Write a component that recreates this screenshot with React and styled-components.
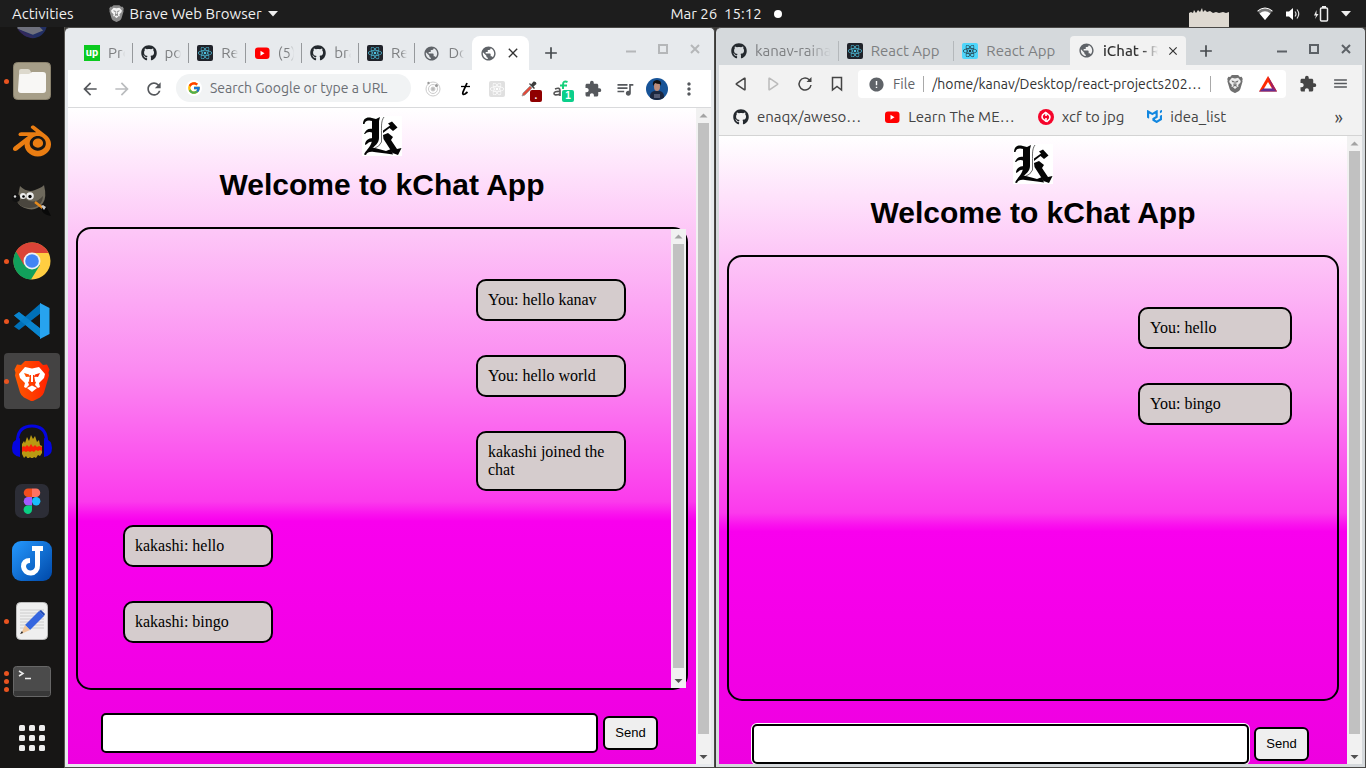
import React from "react";
import styled, { createGlobalStyle, css } from "styled-components";
import { FaGithub, FaReact } from "react-icons/fa";
import {
  MdArrowBack, MdArrowForward, MdRefresh, MdExtension, MdQueueMusic,
  MdMoreVert, MdPublic, MdClose, MdAdd, MdError, MdMenu,
} from "react-icons/md";
import { SiBlender, SiMui } from "react-icons/si";
import { FcGoogle } from "react-icons/fc";

const GlobalStyle = createGlobalStyle`
  * { box-sizing: border-box; }
  body { margin: 0; background: #161514; overflow: hidden; }
  button, input { font: inherit; margin: 0; }
  svg { display: block; flex: none; }
`;

const uiFont = css`
  font-family: Ubuntu, "Noto Sans", "Open Sans", sans-serif;
`;

const Desktop = styled.div`
  ${uiFont}
  height: 100vh;
  display: flex;
  flex-direction: column;
  background: #161514;
`;

/* ---------- top bar ---------- */

const TopBar = styled.header`
  height: 27px;
  flex: none;
  display: grid;
  grid-template-columns: 1fr auto 1fr;
  align-items: center;
  background: #1d1d1d;
  color: #f0f0f0;
  font-size: 15px;
  line-height: 20px;
`;

const BarGroup = styled.div`
  display: flex;
  align-items: center;
  height: 27px;
  gap: ${(p) => p.$gap || 0}px;
  justify-content: ${(p) => (p.$end ? "flex-end" : "flex-start")};
  padding: ${(p) => (p.$end ? "0 15px 0 0" : "0 0 0 12px")};
`;

const BarButton = styled.button`
  display: flex;
  align-items: center;
  gap: 6px;
  padding: 0;
  border: 0;
  background: none;
  color: inherit;
  white-space: nowrap;
`;

const Clock = styled.div`
  display: flex;
  align-items: center;
  gap: 12px;
  padding-left: 86px;
  white-space: pre;
`;

const Dot = styled.i`
  width: 8px;
  height: 8px;
  border-radius: 50%;
  background: #fff;
`;

const Load = styled.svg`
  align-self: flex-end;
  margin-right: 16px;
`;

/* ---------- dock ---------- */

const Main = styled.div`
  flex: 1;
  min-height: 0;
  display: flex;
`;

const Dock = styled.nav`
  width: 65px;
  flex: none;
  display: flex;
  flex-direction: column;
  border-right: 1px solid #55534f;
  background: #171615;
  overflow: hidden;
`;

const DockItem = styled.button`
  position: relative;
  flex: none;
  height: ${(p) => p.$h || 60}px;
  padding: 0;
  border: 0;
  background: none;
  display: flex;
  align-items: center;
  justify-content: center;
`;

const DockTile = styled.span`
  width: 56px;
  height: 56px;
  border-radius: 4px;
  display: flex;
  align-items: center;
  justify-content: center;
  background: ${(p) => (p.$active ? "#444343" : "transparent")};
`;

const Running = styled.span`
  position: absolute;
  left: 4px;
  top: 0;
  bottom: 0;
  display: flex;
  flex-direction: column;
  justify-content: center;
  gap: 3px;
  i {
    width: 5px;
    height: 5px;
    border-radius: 50%;
    background: #e95420;
  }
`;

/* ---------- browser windows ---------- */

const Windows = styled.main`
  flex: 1;
  min-width: 0;
  display: grid;
  grid-template-columns: 1fr 1fr;
  gap: 1px;
  background: #3a3937;
`;

const Window = styled.section`
  min-width: 0;
  min-height: 0;
  display: flex;
  flex-direction: column;
  padding: 0 3px 3px 3px;
  border: solid #4a4947;
  border-width: 1px 1px 1px 0;
  border-radius: 5px 5px 0 0;
  background: ${(p) => p.$frame};
`;

const TabStrip = styled.div`
  flex: none;
  height: ${(p) => p.$h}px;
  padding-top: 8px;
  padding-left: ${(p) => p.$pad}px;
  display: flex;
  font-size: 15px;
`;

const Tabs = styled.div`
  display: flex;
  width: ${(p) => p.$w}px;
`;

const Tab = styled.button`
  flex: ${(p) => (p.$w ? "none" : "1 1 0")};
  width: ${(p) => (p.$w ? p.$w + "px" : "auto")};
  min-width: 0;
  display: flex;
  align-items: center;
  gap: 8px;
  padding: ${(p) => (p.$w ? "0 6px 0 8px" : "0 8px")};
  border: 0;
  border-radius: ${(p) => (p.$active ? `${p.$r}px ${p.$r}px 0 0` : "0")};
  background: ${(p) => p.$active || "transparent"};
  color: ${(p) => (p.$active ? "#333" : "#7d7f81")};
  text-align: left;
`;

const TabText = styled.span`
  flex: 1;
  min-width: 0;
  overflow: hidden;
  white-space: nowrap;
  line-height: 20px;
  font-weight: ${(p) => (p.$strong ? 500 : 400)};
  ${(p) => p.$fade && css`mask-image: linear-gradient(to right, #000 calc(100% - ${p.$fade}px), transparent);`}
`;

const TabDivider = styled.i`
  flex: none;
  width: 1px;
  height: 20px;
  margin-left: -1px;
  align-self: center;
  background: ${(p) => p.$c};
`;

const NewTab = styled.button`
  padding: 0;
  border: 0;
  background: none;
  width: ${(p) => p.$w}px;
  color: #45494d;
  display: flex;
  align-items: center;
  justify-content: center;
`;

const Controls = styled.div`
  margin-left: auto;
  display: flex;
  height: 26px;
  color: ${(p) => p.$c};
`;

const Cell = styled.button`
  position: relative;
  flex: none;
  width: 32px;
  padding: 0;
  border: 0;
  background: none;
  color: inherit;
  display: flex;
  align-items: center;
  justify-content: center;
`;

const Badge = styled.span`
  position: absolute;
  left: 17px;
  top: 16px;
  width: 12px;
  height: 12px;
  border-radius: 2px;
  background: ${(p) => p.$c};
  color: #fff;
  font: bold 10px/12px "Liberation Sans", sans-serif;
  text-align: center;
`;

const Toolbar = styled.div`
  flex: none;
  height: ${(p) => p.$h}px;
  display: flex;
  align-items: stretch;
  padding: 4px 6px 4px ${(p) => p.$pad}px;
  background: ${(p) => p.$bg};
  border-bottom: ${(p) => (p.$line ? "1px solid #d9dadc" : "0")};
  color: #55585c;
`;

const Omnibox = styled.div`
  flex: 1;
  min-width: 0;
  height: 28px;
  display: flex;
  align-items: center;
  gap: 8px;
  margin: ${(p) => (p.$square ? "1px 6px 0 5px" : "0 6px")};
  padding: 0 9px 0 10px;
  border-radius: ${(p) => (p.$square ? 4 : 14)}px;
  background: ${(p) => (p.$square ? "#fff" : "#f1f3f4")};
  font-size: 14px;
  color: #5f6368;
`;

const Address = styled.input`
  flex: 1;
  min-width: 0;
  padding: 0;
  border: 0;
  outline: 0;
  background: none;
  color: #333;
  text-overflow: ellipsis;
  &::placeholder { color: #6b6f74; opacity: 1; }
`;

const GoogleDisc = styled.span`
  width: 16px;
  height: 16px;
  border-radius: 50%;
  background: #fff;
  display: flex;
  align-items: center;
  justify-content: center;
`;

const Rule = styled.i`
  flex: none;
  width: 1px;
  height: 16px;
  background: #a9a9a9;
`;

const Bookmarks = styled.div`
  flex: none;
  height: 34px;
  display: flex;
  align-items: center;
  gap: 23px;
  padding: 0 19px 4px 14px;
  background: #f2f2f2;
  border-bottom: 1px solid #d4d4d4;
  font-size: 15px;
  line-height: 20px;
  color: #444;
`;

const Bookmark = styled.a`
  display: flex;
  align-items: center;
  gap: 8px;
  color: inherit;
  text-decoration: none;
  white-space: nowrap;
`;

const More = styled.button`
  margin-left: auto;
  padding: 0;
  border: 0;
  background: none;
  color: inherit;
  font-size: 18px;
`;

/* ---------- chat page ---------- */

const Viewport = styled.div`
  flex: 1;
  min-height: 0;
  display: flex;
  background: linear-gradient(
    #fff 0%, #fdc6f7 19%, #fb8af1 40%, #fb3aec 60%, #fa10ee 62%, #f900ee 63%, #ee00e0 100%
  );
`;

const Page = styled.div`
  flex: 1;
  min-width: 0;
  overflow: hidden;
  display: flex;
  flex-direction: column;
  align-items: stretch;
  padding: 8px 8px ${(p) => p.$bottom}px;
`;

const Logo = styled.svg`
  align-self: center;
  width: 40px;
  height: 40px;
  background: #fff;
`;

const Title = styled.h1`
  margin: 12px 0 25px;
  font: bold 30px/34px "Liberation Sans", Arial, sans-serif;
  text-align: center;
  color: #000;
`;

const ChatBox = styled.div`
  flex: 1;
  min-height: 0;
  display: flex;
  border: 2px solid #000;
  border-radius: 15px;
`;

const Messages = styled.ul`
  flex: 1;
  min-width: 0;
  margin: 0;
  padding: 50px 45px 0;
  list-style: none;
  display: flex;
  flex-direction: column;
  gap: 34px;
`;

const Message = styled.li`
  align-self: ${(p) => (p.$mine ? "flex-end" : "flex-start")};
  width: 30%;
  min-width: 150px;
  max-width: ${(p) => (p.$wide ? 154 : 150)}px;
  padding: 10px;
  border: 2px solid #000;
  border-radius: 10px;
  background: #d5cccd;
  color: #000;
  font: 16px/18px "Liberation Serif", "Times New Roman", serif;
`;

const Form = styled.form`
  flex: none;
  display: flex;
  align-items: center;
  gap: 5px;
  margin-top: 23px;
  padding: 0 30px 0 25px;
  font: 13px/16px "Liberation Sans", Arial, sans-serif;
`;

const Field = styled.input`
  flex: 1;
  min-width: 0;
  height: 40px;
  padding: 0 8px;
  border: 2px solid #000;
  border-radius: 5px;
  background: #fff;
  outline: 0;
  box-shadow: ${(p) => (p.$focused ? "0 0 0 1px #fff" : "none")};
`;

const Send = styled.button`
  width: 55px;
  height: 34px;
  padding: 0;
  border: 2px solid #000;
  border-radius: 6px;
  background: #efefef;
  color: #000;
`;

/* ---------- scroll bar ---------- */

const Track = styled.div`
  flex: none;
  width: 15px;
  display: flex;
  flex-direction: column;
  align-items: center;
  background: #f1f1f1;
`;

const Thumb = styled.div`
  flex: ${(p) => p.$size} 1 0;
  width: 11px;
  background: #c1c1c1;
`;

const Rest = styled.div`
  flex: ${(p) => p.$size} 1 0;
`;

const Arrow = ({ down }) => (
  <svg width="15" height="15" viewBox="0 0 15 15">
    {down ? <path d="M3.5 6h8l-4 4z" fill="#505050" /> : <path d="M3.5 9.500h8l-4-4z" fill="#a3a3a3" />}
  </svg>
);

const ScrollBar = ({ thumb, rest }) => (
  <Track>
    <Arrow />
    <Thumb $size={thumb} />
    <Rest $size={rest} />
    <Arrow down />
  </Track>
);

/* ---------- drawings ---------- */

const ReactTile = styled.span`
  flex: none;
  width: 16px;
  height: 16px;
  border-radius: 2px;
  background: ${(p) => p.$bg};
  display: flex;
  align-items: center;
  justify-content: center;
`;
const ReactIcon = ({ bg = "#20232a", fg = "#4fc3e0", size = 14 }) => (
  <ReactTile $bg={bg}><FaReact size={size} color={fg} /></ReactTile>
);

const UpTile = styled.span`
  flex: none;
  width: 16px;
  height: 16px;
  background: #0bca1f;
  color: #fff;
  font: bold 11px/15px Roboto, sans-serif;
  text-align: center;
`;

const Youtube = () => (
  <svg width="16" height="16" viewBox="0 0 16 16">
    <rect x="1" y="2.500" width="14.500" height="11.500" rx="3" fill="#f00" />
    <path d="M6.500 5.800v5l4-2.500z" fill="#fff" />
  </svg>
);

const GithubIcon = () => <FaGithub size={16} color="#24292e" />;
const Globe = () => <MdPublic size={17} color="#5f6368" />;

const Minimize = () => (
  <svg width="12" height="12" viewBox="0 0 12 12"><path d="M1 8.500h10" stroke="currentColor" strokeWidth="2" /></svg>
);
const Maximize = () => (
  <svg width="12" height="12" viewBox="0 0 12 12"><rect x="2" y="2" width="8" height="8" fill="none" stroke="currentColor" strokeWidth="2" /></svg>
);
const CloseX = () => (
  <svg width="12" height="12" viewBox="0 0 12 12"><path d="M2 2l8 8M10 2l-8 8" stroke="currentColor" strokeWidth="2" /></svg>
);

const WindowControls = ({ color }) => (
  <Controls $c={color}>
    <Cell aria-label="Minimize"><Minimize /></Cell>
    <Cell aria-label="Maximize"><Maximize /></Cell>
    <Cell aria-label="Close"><CloseX /></Cell>
  </Controls>
);

const PageEmblem = () => (
  <Logo viewBox="0 0 40 40" role="img" aria-label="kChat logo">
    <g fill="#050505">
      <path d="M1 8C1 3 4 1 8 1.500L14 3L18 1L17 5C14 6 10 5 7 4.500C4 4.500 3 6 2.500 8z" />
      <path d="M10 5L17 3V22C17 27 13 30 8 34L5 34C9 29 10 27 10 22z" />
      <path d="M2 18C4 13 7 12 11 13V17C7 15 5 16 3 18z" />
      <path d="M3 29C3 25 6 22 11 22V26C8 25 6 27 5 28z" />
      <path d="M2 38.500C4 34 8 31 13 32L24 35L29 33L31 38.500L24 37.500L12 36C8 35.500 5 36 4 39z" />
      <path d="M26 7.500L30 5.500L35.500 11.500L31 15L27.500 12L21 17V14.500L28 9.500z" />
      <path d="M21 19L26 17L31 21L29 24L35 33L39.500 32L36 39L30.500 37L21.500 23z" />
    </g>
    <path d="M22 1C19 5 19.500 10 19.500 17V26Q17 31 13 32" fill="none" stroke="#444" strokeWidth="0.8" />
  </Logo>
);

const Thunderbird = () => (
  <svg width="36" height="24" viewBox="0 0 40 28">
    <path d="M3 0h34c-2 8-9 13-16 13S6 8 3 0z" fill="#222f63" />
    <path d="M3 2l18 7 12-5-4-4H3z" fill="#6f717d" />
    <path d="M3 2l16 8 4 2C14 13 7 8 3 2z" fill="#33295b" />
  </svg>
);

const Files = () => (
  <svg width="38" height="38" viewBox="0 0 38 38">
    <rect x="0.500" y="0.500" width="37" height="37" rx="4" fill="#a69e88" stroke="#8a826d" />
    <path d="M6 9q0-2 2-2h7q2 0 3 3l-2 8H6z" fill="#ddd9cd" />
    <path d="M6 13q0-1 2-1h8l3-2h11q3 0 3 3v15q0 3-3 3H8q-3 0-3-3z" fill="#f8f7f5" />
  </svg>
);

const Gimp = () => (
  <svg width="40" height="34" viewBox="0 0 40 34">
    <path d="M8 2q7 7 15 4t9-5q3 12-1 18-6 8-15 6Q7 23 5 17z" fill="#6e695c" />
    <path d="M12 14q10 8 19-2-1 12-14 12Q7 23 5 17z" fill="#4a463e" />
    <circle cx="4" cy="14" r="4" fill="#111" /><circle cx="3" cy="12.500" r="1.200" fill="#ddd" />
    <circle cx="11" cy="12" r="3" fill="#eee" /><circle cx="18" cy="12" r="3.800" fill="#eee" />
    <circle cx="11.500" cy="12.500" r="1.300" /><circle cx="18" cy="12.500" r="1.700" />
    <path d="M23 18l9 7" stroke="#e58a1c" strokeWidth="2.500" />
    <path d="M30 23l3-2 3 5 3 6q-7-1-9-5z" fill="#090909" /><path d="M29 22l3 4 2-3-3-2z" fill="#c9c9c9" />
  </svg>
);

const Chrome = () => (
  <svg width="38" height="38" viewBox="0 0 38 38">
    <circle cx="19" cy="19" r="18.500" fill="#ffcd41" />
    <path d="M19 19L3 9.500A18.500 18.500 0 0 0 18 37.500L27 23z" fill="#11a05b" />
    <path d="M19 11h16.500A18.500 18.500 0 0 0 3 9.500L11 23z" fill="#db4437" />
    <circle cx="19" cy="19" r="8.500" fill="#f1f1f1" /><circle cx="19" cy="19" r="6.800" fill="#4285f4" />
  </svg>
);

const Code = () => (
  <svg width="36" height="36" viewBox="0 0 36 36">
    <path d="M0 12.500L5 9l22 17v9z" fill="#0a84cc" />
    <path d="M0 23.500L5 27 27 10V0z" fill="#0070b8" />
    <path d="M0 12.500L5 9l22 17v9z" fill="#0b86d0" fillOpacity="0.75" />
    <path d="M26 0l9.500 5v26L26 36z" fill="#27a3ef" />
  </svg>
);

const Lion = ({ width = 36, height = 40, fill = "url(#lion)", face = "#fff" }) => (
  <svg width={width} height={height} viewBox="0 0 36 40">
    <defs><linearGradient id="lion"><stop offset="0" stopColor="#ff5a00" /><stop offset="1" stopColor="#ff2000" /></linearGradient></defs>
    <path d="M11 0h14l4 4 4-.5 2.500 5-1 3 .5 3-5 17q-1 3-4 5l-8 4-8-4q-3-2-4-5l-5-17 .5-3-1-3L3 3.500 7 4z" fill={fill} />
    <path d="M11 6l7 1.500L25 6l6 7-1 4-5 5 1 4-2 1-3-3 1-3-4-2-4 2 1 3-3 3-2-1 1-4-5-5-1-4z" fill={face} />
    <path d="M13 27l5-2.500 5 2.500-5 4z" fill={face} />
    <path d="M10 12l5 1.500 1 2-4 .5zM26 12l-5 1.500-1 2 4 .5zM16 14h4l1 6-3 3-3-3z" fill={fill} />
    <path d="M17 13h2v8h-2z" fill={face} />
  </svg>
);

const Audacity = () => (
  <svg width="40" height="34" viewBox="0 0 40 34">
    <path d="M5.500 19V15Q7 2 20 2t14.500 13v4" fill="none" stroke="#0505e0" strokeWidth="3" />
    <path d="M8 14v19Q0 32 0 24t8-10zM32 14v19q8-1 8-9t-8-10z" fill="#0505e0" />
    <path d="M10 20l2-3 1 2 2-6 2 4 2-6 2 4 2-3 2 6 2-2 1 5 2 1v7l-2 3-2-1-2 3-2-1-2 2-2-2-2 2-2-3-2 2-2-4z" fill="#b99a12" />
    <path d="M10 23l2-1 1 1 2-2 2 2 2-3 2 3 2-2 2 2 2-1 3 1v4l-2-1-2 1-2-1-2 2-2-1-2 1-2-1-2 1-2-1-2 1z" fill="#fb2108" />
  </svg>
);

const Figma = () => (
  <svg width="34" height="34" viewBox="0 0 34 34">
    <rect width="34" height="34" rx="7" fill="#2c2d36" />
    <path d="M17 4.500h-4a4.200 4.200 0 0 0 0 8.500h4z" fill="#f24e1e" />
    <path d="M17 4.500h4a4.200 4.200 0 0 1 0 8.500h-4z" fill="#ff7262" />
    <path d="M17 13h-4a4.200 4.200 0 0 0 0 8.500h4z" fill="#a259ff" />
    <circle cx="21.200" cy="17.200" r="4.200" fill="#1abcfe" />
    <path d="M17 21.500h-4a4.200 4.200 0 1 0 4 4.200z" fill="#0acf83" />
  </svg>
);

const Joplin = () => (
  <svg width="40" height="40" viewBox="0 0 40 40">
    <defs><linearGradient id="jop" x2="1" y2="1"><stop stopColor="#2599ff" /><stop offset="1" stopColor="#0048a8" /></linearGradient></defs>
    <rect width="40" height="40" rx="9" fill="url(#jop)" />
    <path d="M20 7.500h11M25.500 7.500v17a7 7 0 0 1-14 1q0-6 6.500-6" fill="none" stroke="#fff" strokeWidth="5" />
  </svg>
);

const Editor = () => (
  <svg width="32" height="38" viewBox="0 0 32 38">
    <rect x="0.500" y="0.500" width="31" height="37" rx="4" fill="#efefef" stroke="#bbb" />
    <path d="M4 8h24M4 11h24M4 14h24M4 17h24M4 20h24M4 23h24M4 26h24" stroke="#ccc" />
    <path d="M9 23L23 9l5 5-14 14z" fill="#3566df" /><path d="M23 9l2-1 4 4-1 2z" fill="#214bb4" />
    <path d="M9 23l5 5-9 4z" fill="#efc69b" /><path d="M6 29l-2 3 3-1z" fill="#222" />
  </svg>
);

const Terminal = () => (
  <svg width="38" height="31" viewBox="0 0 38 31">
    <rect x="0.500" y="0.500" width="37" height="30" rx="3" fill="#4b4b4b" stroke="#676767" />
    <path d="M1 25h36v3q0 2-2 2H3q-2 0-2-2z" fill="#383838" />
    <path d="M6 5l4 2.500L6 10M12 12.500h6" fill="none" stroke="#eee" strokeWidth="1.500" />
  </svg>
);

const AppGrid = () => (
  <svg width="26" height="26" viewBox="0 0 26 26" fill="#eee">
    {[0, 10, 20].map((y) => [0, 10, 20].map((x) => <rect key={`${x}-${y}`} x={x} y={y} width="6" height="6" rx="1.500" />))}
  </svg>
);

const Triangle = ({ flip }) => (
  <svg width="14" height="14" viewBox="0 0 14 14">
    <path d={flip ? "M3 1.500v11q0 .5.500.3l8-5.300q.5-.5 0-1l-8-5.300Q3 1 3 1.500z" : "M11 1.500v11q0 .5-.500.3l-8-5.300q-.5-.5 0-1l8-5.300Q11 1 11 1.500z"} fill="none" stroke={flip ? "#bbb" : "#444"} strokeWidth="1.500" />
  </svg>
);

const ThinReload = () => (
  <svg width="16" height="16" viewBox="0 0 16 16">
    <path d="M14 9A6 6 0 1 1 12 3.500L13.500 5" fill="none" stroke="#444" strokeWidth="1.500" />
    <path d="M14.500 1v5h-5z" fill="#444" />
  </svg>
);

const Ribbon = () => (
  <svg width="14" height="16" viewBox="0 0 14 16"><path d="M2.500 1.500h9v12.500L7 10.500 2.500 14z" fill="none" stroke="#444" strokeWidth="1.500" /></svg>
);

const Bat = () => (
  <svg width="18" height="16" viewBox="0 0 18 16">
    <path d="M9 0l9 15.500H0z" fill="#ff2a00" /><path d="M9 0l9 15.500-5-3z" fill="#9e1f63" /><path d="M0 15.500h18l-5-3.500H5z" fill="#662d91" />
    <path d="M9 6l4 6.500H5z" fill="#fff" />
  </svg>
);

const Orbit = () => (
  <svg width="16" height="16" viewBox="0 0 16 16" fill="none" stroke="#ccc">
    <circle cx="8" cy="8" r="7" /><circle cx="8" cy="8" r="4.500" /><circle cx="8" cy="8" r="2" fill="#bbb" />
    <circle cx="3.500" cy="2" r="1.200" fill="#999" stroke="none" /><circle cx="11.500" cy="4.500" r="1.500" fill="#999" stroke="none" />
  </svg>
);

const ScriptMark = () => (
  <svg width="12" height="14" viewBox="0 0 12 14">
    <path d="M8 1L4 10q-1 3 2 2l2.500-2" fill="none" stroke="#000" strokeWidth="1.800" />
    <path d="M2 4.500h9" stroke="#000" strokeWidth="1.300" />
  </svg>
);

const Dropper = () => (
  <svg width="16" height="16" viewBox="0 0 16 16">
    <path d="M1 15l1-3 7-7 2 2-7 7z" fill="#e04a3a" stroke="#999" strokeWidth="0.8" />
    <path d="M8 3l5 5 1-1-1.500-1.500L15.500 3q0-3-3-2.500L10 3.500 9 2z" fill="#3c3c3c" />
  </svg>
);

const FontsMark = () => (
  <svg width="18" height="18" viewBox="0 0 18 18" fill="none">
    <path d="M3 9q5-2 5 1.500V16M8 11.500q-6-.5-6 2T8 14" stroke="#555" strokeWidth="1.600" />
    <path d="M15.500 2Q11 0 11 5v4M8 5.500h7" stroke="#16cf7b" strokeWidth="2" />
  </svg>
);

const Avatar = () => (
  <svg width="22" height="22" viewBox="0 0 22 22">
    <defs><clipPath id="face"><circle cx="11" cy="11" r="11" /></clipPath></defs>
    <g clipPath="url(#face)">
      <rect width="22" height="22" fill="#175397" />
      <path d="M4 22q-1-8 4-9h6q5 1 4 9z" fill="#1b2740" />
      <ellipse cx="11" cy="8.500" rx="3" ry="4.500" fill="#bd8d79" />
      <path d="M7 8Q6 2 11 2t4 6l-1-2q-3 0-5-1z" fill="#111" />
      <path d="M8 17h6M8 19h6" stroke="#8a8da5" />
    </g>
  </svg>
);

const RedSwirl = () => (
  <svg width="16" height="16" viewBox="0 0 16 16">
    <circle cx="8" cy="8" r="8" fill="#f5052b" />
    <path d="M8 3L4.500 6q-1 2 0 3.500L7.500 12M8.500 13L11.500 10q1-2 0-3.500L8.500 4M8 3v4M8 13V9" fill="none" stroke="#fff" strokeWidth="1.600" />
  </svg>
);

const Battery = () => (
  <svg width="16" height="16" viewBox="0 0 16 16">
    <rect x="7.500" y="2" width="7" height="13" rx="1" fill="none" stroke="#eee" strokeWidth="1.500" />
    <path d="M9 0h4v2H9z" fill="#eee" /><path d="M3.500 4L1 9.500h2L2 13l3.500-5h-2z" fill="#eee" />
  </svg>
);

const Wifi = () => (
  <svg width="16" height="14" viewBox="0 0 16 14">
    <path d="M8 13L.5 4Q8-2 15.500 4z" fill="#777" /><path d="M8 13L2.500 6.500Q8 2 13.500 6.500z" fill="#fff" />
    <path d="M.5 4Q8-2 15.500 4" fill="none" stroke="#fff" />
  </svg>
);

const Speaker = () => (
  <svg width="16" height="14" viewBox="0 0 16 14">
    <path d="M1 4.500h3L8 1v12L4 9.500H1z" fill="#fff" />
    <path d="M10 4.500q2 2.500 0 5M12 2.500q3.500 4.500 0 9" fill="none" stroke="#ddd" strokeWidth="1.200" />
  </svg>
);

const Caret = () => (
  <svg width="10" height="6" viewBox="0 0 10 6"><path d="M0 0h10L5 5.500z" fill="#eee" /></svg>
);

/* ---------- page content ---------- */

const dock = [
  { label: "Files", icon: <Files />, running: 1 },
  { label: "Blender", icon: <SiBlender size={38} color="#ea7d12" /> },
  { label: "GIMP", icon: <Gimp /> },
  { label: "Chrome", icon: <Chrome />, running: 1 },
  { label: "Code", icon: <Code />, running: 1 },
  { label: "Brave", icon: <Lion />, running: 1, active: true },
  { label: "Audacity", icon: <Audacity /> },
  { label: "Figma", icon: <Figma /> },
  { label: "Joplin", icon: <Joplin /> },
  { label: "Text Editor", icon: <Editor />, running: 1 },
  { label: "Terminal", icon: <Terminal />, running: 3 },
];

const chromeTabs = [
  { icon: <UpTile>up</UpTile>, text: "Pro" },
  { icon: <GithubIcon />, text: "po" },
  { icon: <ReactIcon />, text: "Re" },
  { icon: <Youtube />, text: "(5)" },
  { icon: <GithubIcon />, text: "bra" },
  { icon: <ReactIcon />, text: "Re" },
  { icon: <Globe />, text: "Do" },
];

const braveTabs = [
  { icon: <GithubIcon />, text: "kanav-raina" },
  { icon: <ReactIcon />, text: "React App" },
  { icon: <ReactIcon bg="#4fd6fb" fg="#20333d" />, text: "React App" },
];

const leftChat = [
  { text: "You: hello kanav", mine: true },
  { text: "You: hello world", mine: true },
  { text: "kakashi joined the chat", mine: true },
  { text: "kakashi: hello" },
  { text: "kakashi: bingo" },
];

const rightChat = [
  { text: "You: hello", mine: true },
  { text: "You: bingo", mine: true },
];

const ChatPage = ({ messages, scroll, bottom, thumb, rest, focused, wide }) => (
  <Viewport>
    <Page $bottom={bottom}>
      <PageEmblem />
      <Title>Welcome to kChat App</Title>
      <ChatBox>
        <Messages>
          {messages.map((m) => (
            <Message key={m.text} $mine={m.mine} $wide={wide}>{m.text}</Message>
          ))}
        </Messages>
        {scroll && <ScrollBar thumb={424} rest={5} />}
      </ChatBox>
      <Form onSubmit={(e) => e.preventDefault()}>
        <Field type="text" aria-label="Message" $focused={focused} />
        <Send type="submit">Send</Send>
      </Form>
    </Page>
    <ScrollBar thumb={thumb} rest={rest} />
  </Viewport>
);

const ChromeWindow = () => (
  <Window $frame="#e7eaed">
    <TabStrip $h={42} $pad={8}>
      <Tabs $w={396}>
        {chromeTabs.map((t, i) => (
          <React.Fragment key={i}>
            <Tab>{t.icon}<TabText $fade={6}>{t.text}</TabText></Tab>
            {i < 6 && <TabDivider $c="#96999c" />}
          </React.Fragment>
        ))}
      </Tabs>
      <Tab $w={57} $active="#fff" $r={8} aria-label="Current tab">
        <Globe /><MdClose size={16} />
      </Tab>
      <NewTab $w={44} aria-label="New tab"><MdAdd size={20} /></NewTab>
      <WindowControls color="#b5b7b9" />
    </TabStrip>
    <Toolbar $h={38} $pad={6} $bg="#fff" $line>
      <Cell aria-label="Back"><MdArrowBack size={20} /></Cell>
      <Cell aria-label="Forward"><MdArrowForward size={20} color="#babcbe" /></Cell>
      <Cell aria-label="Reload"><MdRefresh size={20} /></Cell>
      <Omnibox>
        <GoogleDisc><FcGoogle size={14} /></GoogleDisc>
        <Address type="text" aria-label="Address" placeholder="Search Google or type a URL" />
      </Omnibox>
      <Cell aria-label="Orbit"><Orbit /></Cell>
      <Cell aria-label="Script"><ScriptMark /></Cell>
      <Cell aria-label="React tools"><ReactIcon bg="#e0e0e0" fg="#fff" /></Cell>
      <Cell aria-label="Colour picker"><Dropper /><Badge $c="#8f0000">.</Badge></Cell>
      <Cell aria-label="Fonts"><FontsMark /><Badge $c="#0bcf8b">1</Badge></Cell>
      <Cell aria-label="Extensions"><MdExtension size={18} /></Cell>
      <Cell aria-label="Media"><MdQueueMusic size={20} /></Cell>
      <Cell aria-label="Profile"><Avatar /></Cell>
      <Cell aria-label="Menu"><MdMoreVert size={20} /></Cell>
    </Toolbar>
    <ChatPage messages={leftChat} scroll bottom={11} thumb={611} rest={15} />
  </Window>
);

const BraveWindow = () => (
  <Window $frame="#d5d9dc">
    <TabStrip $h={37} $pad={4}>
      <Tabs $w={347}>
        {braveTabs.map((t, i) => (
          <React.Fragment key={i}>
            <Tab>{t.icon}<TabText $fade={i ? 0 : 24}>{t.text}</TabText></Tab>
            {i < 2 && <TabDivider $c="#b4b8bb" />}
          </React.Fragment>
        ))}
      </Tabs>
      <Tab $w={116} $active="#f2f2f2" $r={4}>
        <Globe /><TabText $fade={16} $strong>iChat - Re</TabText><MdClose size={14} />
      </Tab>
      <NewTab $w={40} aria-label="New tab"><MdAdd size={20} /></NewTab>
      <WindowControls color="#5c6166" />
    </TabStrip>
    <Toolbar $h={37} $pad={6} $bg="#f2f2f2">
      <Cell aria-label="Back"><Triangle /></Cell>
      <Cell aria-label="Forward"><Triangle flip /></Cell>
      <Cell aria-label="Reload"><ThinReload /></Cell>
      <Cell aria-label="Bookmark"><Ribbon /></Cell>
      <Omnibox $square>
        <MdError size={17} />
        <span>File</span>
        <Rule />
        <Address type="text" aria-label="Address" defaultValue="/home/kanav/Desktop/react-projects202…" />
        <Rule />
        <Cell as="span"><Lion width={16} height={18} fill="#707070" face="#eee" /></Cell>
        <Bat />
      </Omnibox>
      <Cell aria-label="Extensions"><MdExtension size={18} color="#444" /></Cell>
      <Cell aria-label="Menu"><MdMenu size={17} /></Cell>
    </Toolbar>
    <Bookmarks>
      <Bookmark href="#enaqx"><GithubIcon />enaqx/aweso…</Bookmark>
      <Bookmark href="#learn"><Youtube />Learn The ME…</Bookmark>
      <Bookmark href="#xcf"><RedSwirl />xcf to jpg</Bookmark>
      <Bookmark href="#ideas"><SiMui size={15} color="#1187e0" />idea_list</Bookmark>
      <More aria-label="More bookmarks">»</More>
    </Bookmarks>
    <ChatPage messages={rightChat} bottom={0} thumb={583} rest={15} focused wide />
  </Window>
);

export default function App() {
  return (
    <Desktop>
      <GlobalStyle />
      <TopBar>
        <BarGroup $gap={35}>
          <BarButton>Activities</BarButton>
          <BarButton><Lion width={15} height={17} fill="#8c8c8c" face="#f4f4f4" />Brave Web Browser<Caret /></BarButton>
        </BarGroup>
        <Clock>{"Mar 26  15:12"}<Dot /></Clock>
        <BarGroup $gap={12} $end>
          <Load width="40" height="19" viewBox="0 0 40 19">
            <path d="M0 19V5l2-1 2 1 1-3 2 3 2-3 2 2 2-4 1 4 2-2 2 2 3-1 3 2 3-1 3 1 4-1 3 1 3-1v15z" fill="#ded9d1" />
          </Load>
          <Wifi /><Speaker /><Battery /><Caret />
        </BarGroup>
      </TopBar>
      <Main>
        <Dock>
          <DockItem $h={24} aria-label="Thunderbird"><Thunderbird /></DockItem>
          {dock.map((d) => (
            <DockItem key={d.label} aria-label={d.label}>
              {d.running && <Running>{Array.from({ length: d.running }, (_, i) => <i key={i} />)}</Running>}
              <DockTile $active={d.active}>{d.icon}</DockTile>
            </DockItem>
          ))}
          <DockItem $h={54} aria-label="Show applications"><AppGrid /></DockItem>
        </Dock>
        <Windows>
          <ChromeWindow />
          <BraveWindow />
        </Windows>
      </Main>
    </Desktop>
  );
}
